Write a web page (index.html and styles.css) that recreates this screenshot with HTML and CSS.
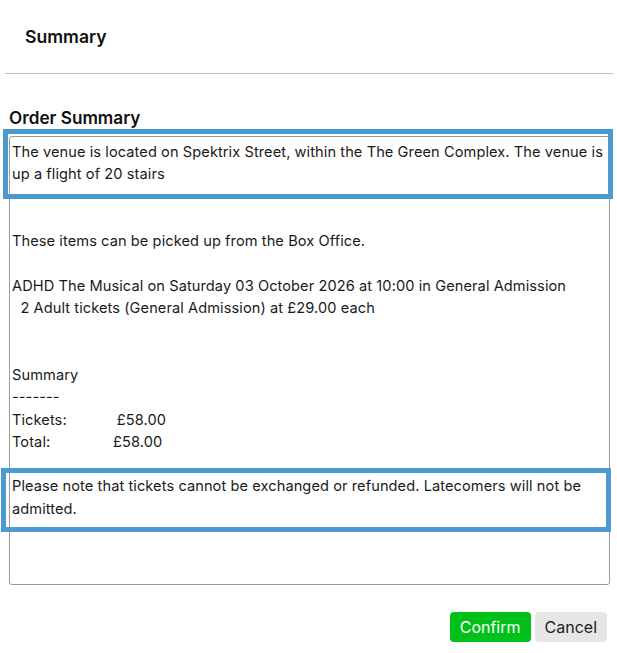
FILE: index.html
```html
<!DOCTYPE html>
<html lang="en">
<head>
<meta charset="utf-8">
<title>Summary</title>
<link rel="stylesheet" href="styles.css">
</head>
<body>
<div class="modal">
  <div class="modal-header">Summary</div>
  <div class="divider"></div>
  <div class="modal-body">
    <h2 class="section-title">Order Summary</h2>
    <div class="summary-box">
      <div class="summary-text">The venue is located on Spektrix Street, within the The Green Complex. The venue is up a flight of 20 stairs


These items can be picked up from the Box Office.

ADHD The Musical on Saturday 03 October 2026 at 10:00 in General Admission
  2 Adult tickets (General Admission) at £29.00 each


Summary
-------
Tickets:            £58.00
Total:               £58.00

Please note that tickets cannot be exchanged or refunded. Latecomers will not be admitted.</div>
      <div class="highlight highlight-top"></div>
      <div class="highlight highlight-bottom"></div>
    </div>
  </div>
  <div class="modal-footer">
    <button class="btn btn-confirm">Confirm</button>
    <button class="btn btn-cancel">Cancel</button>
  </div>
</div>
</body>
</html>
```
FILE: styles.css
```css
html, body {
  margin: 0;
  padding: 0;
  background: #ffffff;
}
body {
  font-family: Inter, "Noto Sans", "Liberation Sans", sans-serif;
  color: #1a1a1a;
}
.modal {
  width: 617px;
  height: 653px;
  display: flex;
  flex-direction: column;
}
.modal-header {
  height: 73px;
  padding-left: 25px;
  display: flex;
  align-items: center;
  font-size: 17.6px;
  font-weight: 600;
  color: #111;
}
.divider {
  height: 1px;
  background: #bdbdbd;
  margin: 0 4px 0 5px;
}
.modal-body {
  padding: 0 9px;
  position: relative;
}
.section-title {
  margin: 34px 0 0 0;
  font-size: 17.2px;
  font-weight: 600;
  line-height: 20px;
  color: #111;
}
.summary-box {
  position: relative;
  margin-top: 8px;
  height: 443px;
  border: 1px solid #9a9a9a;
  border-radius: 3px;
  padding: 4px 2px 0 2px;
  box-sizing: content-box;
  width: 595px;
}
.summary-text {
  white-space: pre-wrap;
  font-size: 14.6px;
  line-height: 22.3px;
  letter-spacing: 0.08px;
  color: #1a1a1a;
}
.highlight {
  position: absolute;
  border: 5px solid #4b9bd0;
  pointer-events: none;
}
.highlight-top {
  left: -7px;
  top: -8px;
  width: 600px;
  height: 60px;
}
.highlight-bottom {
  left: -9px;
  top: 331px;
  width: 600px;
  height: 54px;
}
.modal-footer {
  display: flex;
  justify-content: flex-end;
  gap: 4px;
  padding: 0 10px 0 0;
  margin-top: 27px;
}
.btn {
  font-family: Inter, "Noto Sans", "Liberation Sans", sans-serif;
  font-size: 16px;
  height: 30px;
  border: none;
  border-radius: 4px;
  padding: 0 10px;
}
.btn-confirm {
  background: #00c019;
  color: #ffffff;
}
.btn-cancel {
  background: #e6e6e6;
  color: #222;
}
```
